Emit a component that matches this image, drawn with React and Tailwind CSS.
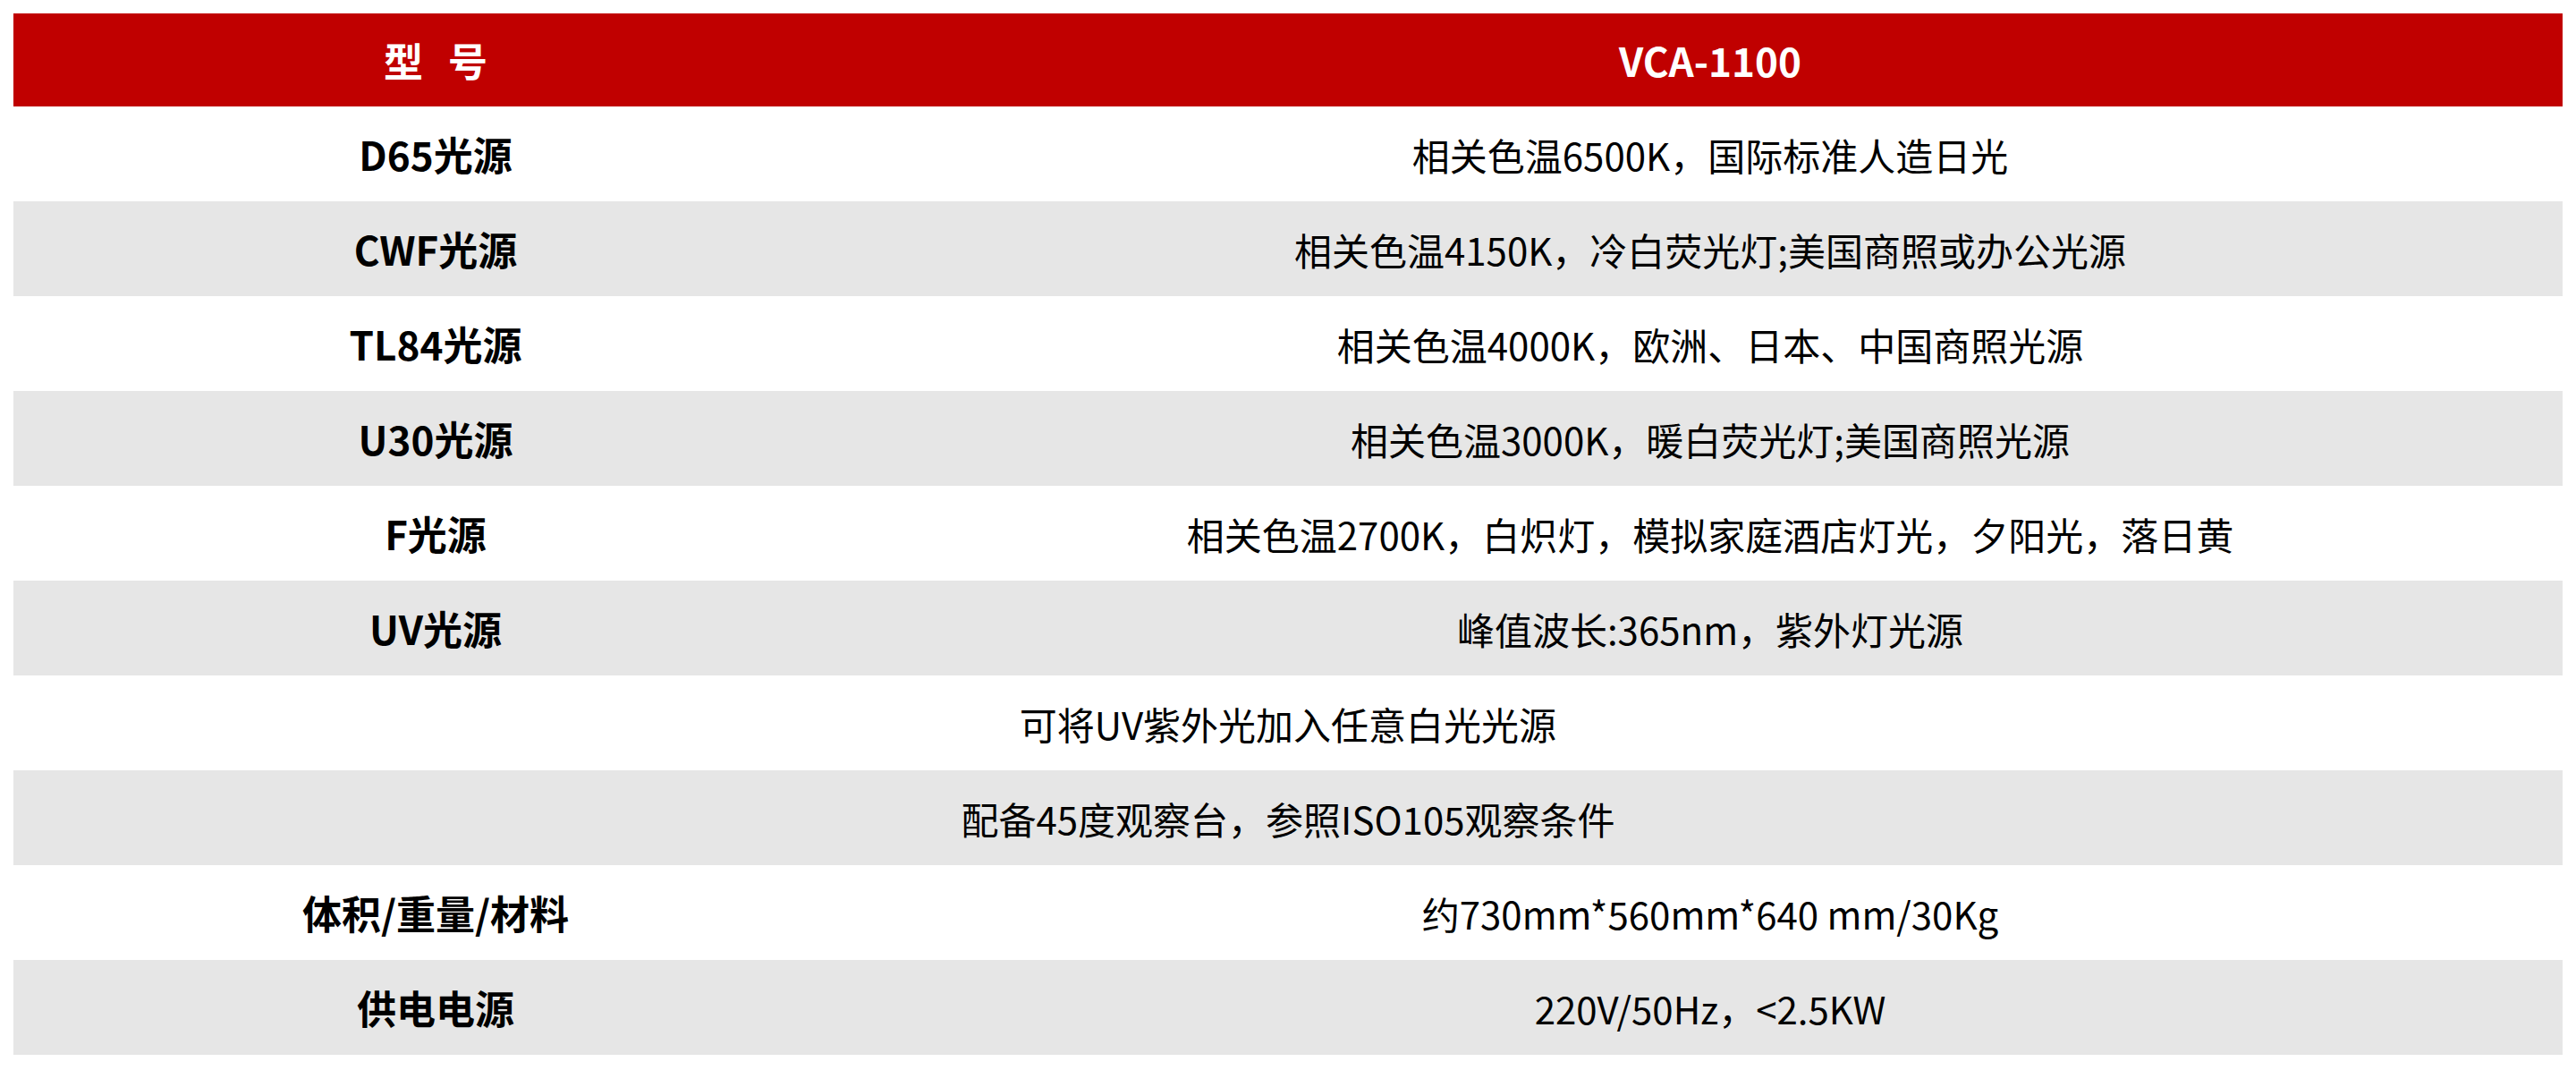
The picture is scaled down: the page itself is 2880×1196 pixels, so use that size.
import React from 'react';

const rows = [
    { label: 'D65光源', value: '相关色温6500K，国际标准人造日光' },
    { label: 'CWF光源', value: '相关色温4150K，冷白荧光灯;美国商照或办公光源' },
    { label: 'TL84光源', value: '相关色温4000K，欧洲、日本、中国商照光源' },
    { label: 'U30光源', value: '相关色温3000K，暖白荧光灯;美国商照光源' },
    { label: 'F光源', value: '相关色温2700K，白炽灯，模拟家庭酒店灯光，夕阳光，落日黄' },
    { label: 'UV光源', value: '峰值波长:365nm，紫外灯光源' },
    { full: '可将UV紫外光加入任意白光光源' },
    { full: '配备45度观察台，参照ISO105观察条件' },
    { label: '体积/重量/材料', value: '约730mm*560mm*640 mm/30Kg' },
    { label: '供电电源', value: '220V/50Hz，<2.5KW' },
];

const App = () => {
    return (
        <div
            className="min-h-screen bg-white p-[15px] text-black"
            style={{ fontFamily: '"Noto Sans CJK SC", "Noto Sans", sans-serif' }}
        >
            <div className="w-[2850px]">
                <div className="flex h-[104px] bg-[#c00000] text-[44px] font-bold text-white">
                    <div className="flex w-[944px] items-center justify-center gap-[28px]">
                        <span>型</span>
                        <span>号</span>
                    </div>
                    <div className="flex flex-1 items-center justify-center">VCA-1100</div>
                </div>

                {rows.map((row, index) => (
                    <div
                        key={index}
                        className={`flex h-[106px] text-[42px] ${index % 2 === 1 ? 'bg-[#e6e6e6]' : 'bg-white'}`}
                    >
                        {row.full ? (
                            <div className="flex flex-1 items-center justify-center">{row.full}</div>
                        ) : (
                            <>
                                <div className="flex w-[944px] items-center justify-center text-[44px] font-bold">
                                    {row.label}
                                </div>
                                <div className="flex flex-1 items-center justify-center">{row.value}</div>
                            </>
                        )}
                    </div>
                ))}
            </div>
        </div>
    );
};

export default App;
